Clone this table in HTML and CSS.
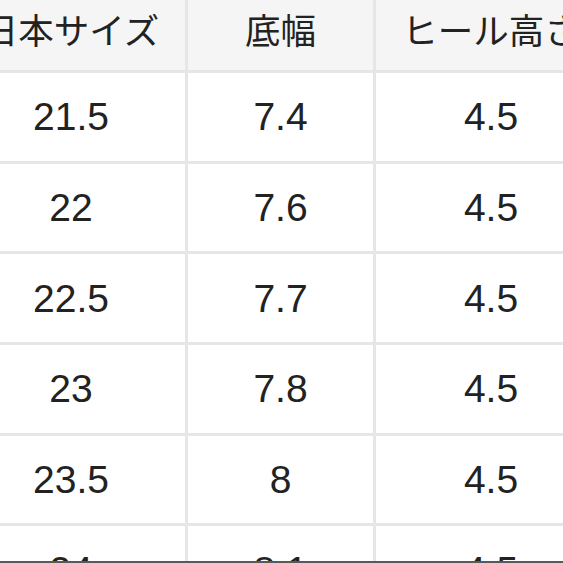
FILE: index.html
```html
<!DOCTYPE html>
<html lang="ja">
<head>
<meta charset="utf-8">
<title>サイズ表</title>
<link rel="stylesheet" href="styles.css">
</head>
<body>
<div class="frame">
  <div class="size-table">
    <div class="cell head">日本サイズ</div>
    <div class="cell head">底幅</div>
    <div class="cell head">ヒール高さ</div>

    <div class="cell">21.5</div><div class="cell">7.4</div><div class="cell">4.5</div>
    <div class="cell">22</div><div class="cell">7.6</div><div class="cell">4.5</div>
    <div class="cell">22.5</div><div class="cell">7.7</div><div class="cell">4.5</div>
    <div class="cell">23</div><div class="cell">7.8</div><div class="cell">4.5</div>
    <div class="cell">23.5</div><div class="cell">8</div><div class="cell">4.5</div>
    <div class="cell">24</div><div class="cell">8.1</div><div class="cell">4.5</div>
  </div>
</div>
</body>
</html>
```

FILE: styles.css
```css
html, body {
  margin: 0;
  padding: 0;
  background: #ffffff;
}

.frame {
  width: 563px;
  height: 561px;
  overflow: hidden;
  border-bottom: 2px solid #595959;
  background: #ffffff;
}

.size-table {
  display: grid;
  grid-template-columns: 228px 185px 230px;
  grid-template-rows: 70px repeat(6, 87.7px);
  gap: 3px;
  margin-left: -43px;
  width: 649px;
  background: #e6e6e6;
  font-family: "Liberation Sans", "Noto Sans CJK JP", sans-serif;
  color: #222222;
}

.cell {
  background: #ffffff;
  display: flex;
  align-items: center;
  justify-content: center;
  font-size: 39px;
  line-height: 1;
}

.cell.head {
  background: #f5f5f5;
  font-family: "Noto Sans CJK JP", "Liberation Sans", sans-serif;
  font-size: 35.5px;
  padding-bottom: 13px;
  box-sizing: border-box;
  white-space: nowrap;
}
```
